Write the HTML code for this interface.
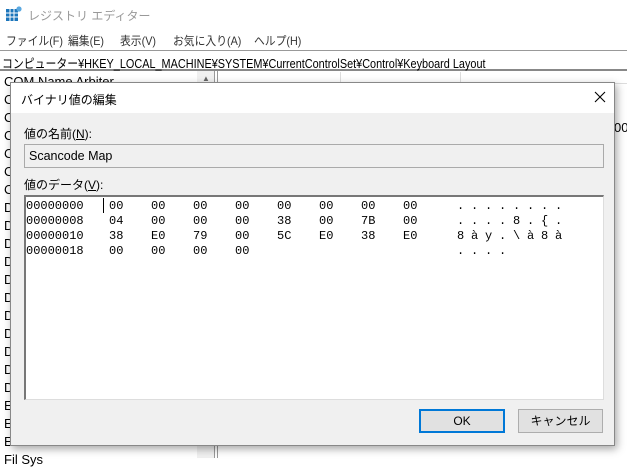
<!DOCTYPE html>
<html><head><meta charset="utf-8"><style>
*{margin:0;padding:0;box-sizing:border-box}
body{width:627px;height:458px;overflow:hidden;background:#fff;font-family:"Liberation Sans","Noto Sans CJK JP",sans-serif;font-size:12px;color:#000;position:relative}
.a{position:absolute;white-space:nowrap}
.mono{font-family:"Liberation Mono","DejaVu Sans Mono",monospace;font-size:12px}
</style></head><body>
<!-- title -->
<svg class="a" style="left:6px;top:6px" width="16" height="16"><rect x="0" y="3" width="12" height="12" fill="#1b75bb"/><g stroke="#fff" stroke-width="1"><line x1="4" y1="3" x2="4" y2="15"/><line x1="8" y1="3" x2="8" y2="15"/><line x1="0" y1="7" x2="12" y2="7"/><line x1="0" y1="11" x2="12" y2="11"/></g><circle cx="13" cy="3" r="2.6" fill="#5aa8e0"/></svg>
<div class="a" style="left:28px;top:7px;color:#999">レジストリ エディター</div>
<!-- menu -->
<div class="a" style="left:6px;top:32px;color:#333;transform:scaleX(.9);transform-origin:0 0">ファイル(F)</div>
<div class="a" style="left:68px;top:32px;color:#333;transform:scaleX(.9);transform-origin:0 0">編集(E)</div>
<div class="a" style="left:120px;top:32px;color:#333;transform:scaleX(.9);transform-origin:0 0">表示(V)</div>
<div class="a" style="left:173px;top:32px;color:#333;transform:scaleX(.9);transform-origin:0 0">お気に入り(A)</div>
<div class="a" style="left:254px;top:32px;color:#333;transform:scaleX(.9);transform-origin:0 0">ヘルプ(H)</div>
<!-- address -->
<div class="a" style="left:0;top:50px;width:627px;height:21px;border-top:1px solid #999;border-bottom:2px solid #888"></div>
<div class="a" style="left:2px;top:53px;font-size:12.5px;transform:scaleX(.87);transform-origin:0 0">コンピューター¥HKEY_LOCAL_MACHINE¥SYSTEM¥CurrentControlSet¥Control¥Keyboard Layout</div>
<!-- left tree -->
<div class="a" style="left:197px;top:71px;width:17px;height:387px;background:#f0f0f0"></div>
<div class="a" style="left:202px;top:74px;font-size:8px;color:#666">▲</div>
<div class="a" style="left:214px;top:71px;width:4px;height:387px;background:#fff;border-left:1px solid #999;border-right:1px solid #999"></div>
<div class="a" style="left:4px;top:73px;line-height:18px;font-size:13px">COM Name Arbiter<br>C<br>C<br>C<br>C<br>C<br>C<br>D<br>D<br>D<br>D<br>D<br>D<br>D<br>D<br>D<br>D<br>D<br>Ea<br>El<br>Er<br>Fil Sys</div>
<div class="a" style="left:220px;top:72px;width:407px;height:12px;border-bottom:1px solid #ddd"></div>
<div class="a" style="left:340px;top:72px;width:1px;height:12px;background:#ddd"></div>
<div class="a" style="left:460px;top:72px;width:1px;height:12px;background:#ddd"></div>
<div class="a" style="left:614px;top:120px;font-size:13px">00</div>
<!-- dialog -->
<div class="a" style="left:10px;top:82px;width:605px;height:364px;background:#f0f0f0;border:1px solid #888;box-shadow:2px 3px 8px rgba(0,0,0,.35)">
 <div class="a" style="left:0;top:0;width:603px;height:30px;background:#fff"></div>
 <div class="a" style="left:10px;top:8px;font-size:12px">バイナリ値の編集</div>
 <svg class="a" style="left:583px;top:8px" width="12" height="12"><path d="M1 1L11 11M11 1L1 11" stroke="#000" stroke-width="1.1"/></svg>
 <div class="a" style="left:13px;top:42px">値の名前(<u>N</u>):</div>
 <div class="a" style="left:13px;top:61px;width:580px;height:24px;border:1px solid #aaa;background:#f0f0f0;padding:4px 4px;font-size:12.5px">Scancode Map</div>
 <div class="a" style="left:13px;top:93px">値のデータ(<u>V</u>):</div>
 <div class="a" style="left:13px;top:112px;width:580px;height:205px;background:#fff;border:1px solid #ddd;border-top:2px solid #777;border-left:2px solid #777"></div>
 <div class="a" style="left:92px;top:115px;width:1px;height:15px;background:#000"></div>
 <div class="a" style="left:408px;top:326px;width:86px;height:24px;border:2px solid #0078d7;background:#e1e1e1;text-align:center;line-height:20px">OK</div>
 <div class="a" style="left:507px;top:326px;width:85px;height:24px;border:1px solid #adadad;background:#e1e1e1;text-align:center;line-height:22px">キャンセル</div>
</div>
<!-- hex rows -->
<div class="a mono" style="left:26px;top:199px;line-height:15px">00000000<br>00000008<br>00000010<br>00000018</div>
<div class="a mono" style="left:109px;top:199px;line-height:15px;word-spacing:0">
<div style="display:flex;gap:0"><span style="width:42px">00</span><span style="width:42px">00</span><span style="width:42px">00</span><span style="width:42px">00</span><span style="width:42px">00</span><span style="width:42px">00</span><span style="width:42px">00</span><span style="width:42px">00</span></div>
<div style="display:flex"><span style="width:42px">04</span><span style="width:42px">00</span><span style="width:42px">00</span><span style="width:42px">00</span><span style="width:42px">38</span><span style="width:42px">00</span><span style="width:42px">7B</span><span style="width:42px">00</span></div>
<div style="display:flex"><span style="width:42px">38</span><span style="width:42px">E0</span><span style="width:42px">79</span><span style="width:42px">00</span><span style="width:42px">5C</span><span style="width:42px">E0</span><span style="width:42px">38</span><span style="width:42px">E0</span></div>
<div style="display:flex"><span style="width:42px">00</span><span style="width:42px">00</span><span style="width:42px">00</span><span style="width:42px">00</span></div>
</div>
<div class="a mono" style="left:457px;top:199px;line-height:15px">
<div style="display:flex"><span style="width:14px">.</span><span style="width:14px">.</span><span style="width:14px">.</span><span style="width:14px">.</span><span style="width:14px">.</span><span style="width:14px">.</span><span style="width:14px">.</span><span style="width:14px">.</span></div>
<div style="display:flex"><span style="width:14px">.</span><span style="width:14px">.</span><span style="width:14px">.</span><span style="width:14px">.</span><span style="width:14px">8</span><span style="width:14px">.</span><span style="width:14px">{</span><span style="width:14px">.</span></div>
<div style="display:flex"><span style="width:14px">8</span><span style="width:14px">à</span><span style="width:14px">y</span><span style="width:14px">.</span><span style="width:14px">\</span><span style="width:14px">à</span><span style="width:14px">8</span><span style="width:14px">à</span></div>
<div style="display:flex"><span style="width:14px">.</span><span style="width:14px">.</span><span style="width:14px">.</span><span style="width:14px">.</span></div>
</div>
</body></html>
